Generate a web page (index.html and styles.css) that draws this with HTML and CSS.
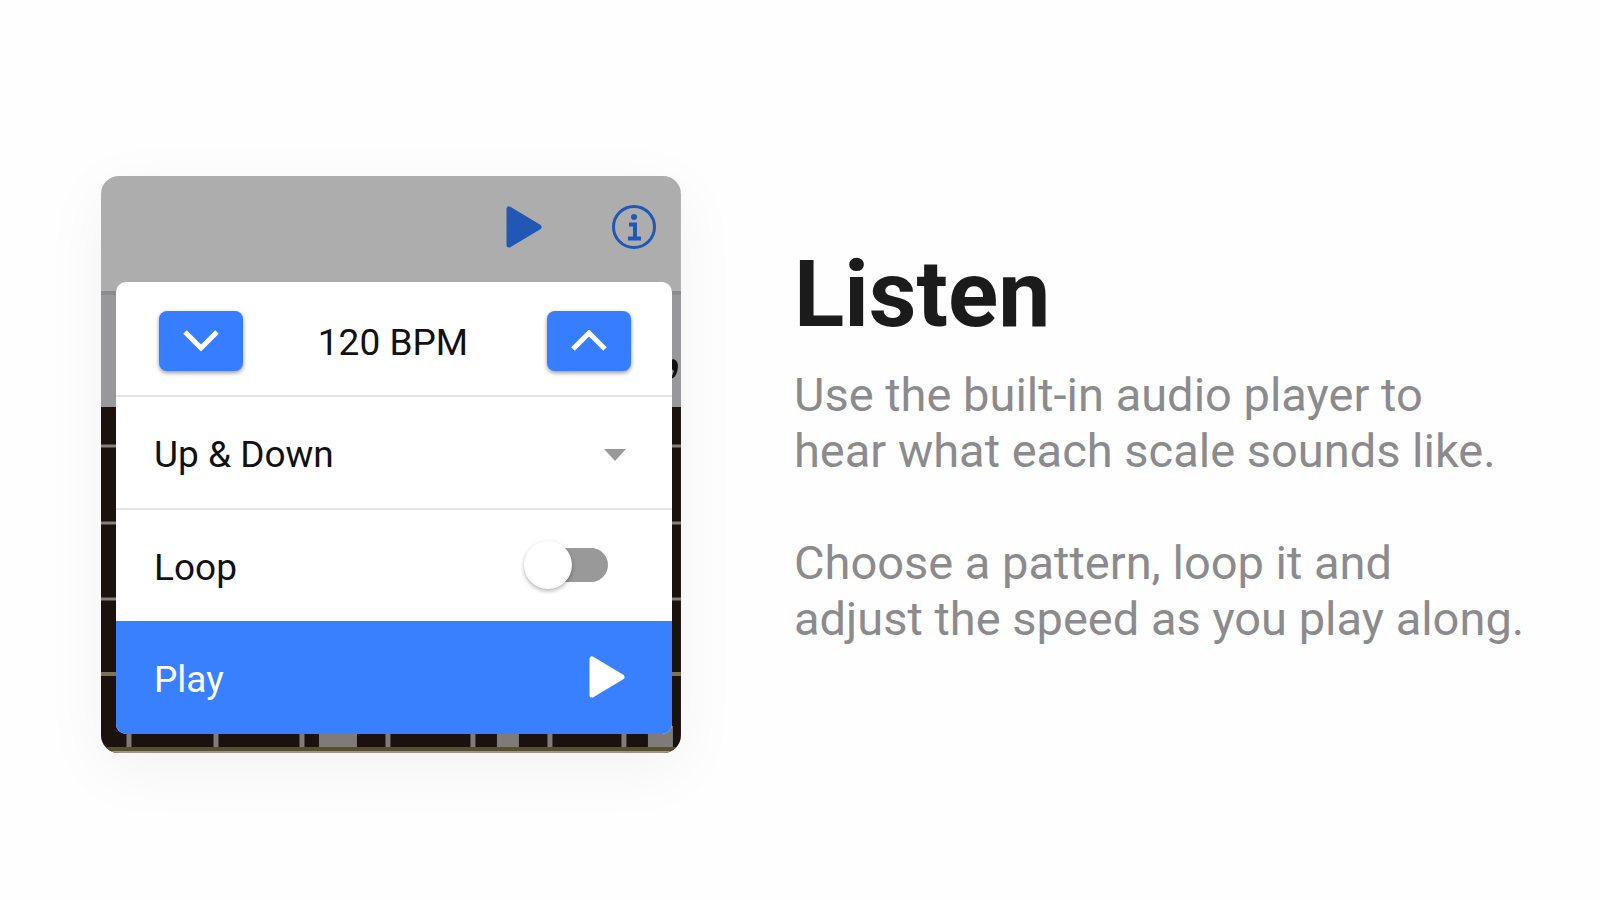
FILE: index.html
```
<!DOCTYPE html>
<html lang="en">
<head>
    <meta charset="UTF-8">
    <meta name="viewport" content="width=device-width, initial-scale=1">
    <title>Listen</title>
    <link rel="stylesheet" href="styles.css">
</head>
<body>
    <main class="feature">
        <section class="phone">
            <!-- fretboard behind the player -->
            <svg class="fretboard" viewBox="0 0 580 577" preserveAspectRatio="none" aria-hidden="true">
                <rect width="580" height="577" fill="#adadad"/>
                <rect y="115" width="580" height="4" fill="#8c8c8c"/>
                <rect y="119" width="580" height="112" fill="#98989a"/>
                <rect y="231" width="580" height="346" fill="#1b1210"/>
                <path d="M0 270h580M0 347h580M0 423h580" stroke="#86807e" stroke-width="3"/>
                <path d="M0 498h580" stroke="#7d7353" stroke-width="4"/>
                <path d="M28 550v21M115 550v21M201 550v21M287 550v21M372 550v21M449 550v21M523 550v21" stroke="#827b79" stroke-width="5"/>
                <path d="M218 550h38v21h-38zM396 550h22v21h-22zM547 550h25v21h-25z" fill="#807a78"/>
                <rect y="571" width="580" height="4" fill="#57502f"/>
                <rect y="575" width="580" height="2" fill="#9c978c"/>
                <path d="M570 184c3-2 7 1 7 6s-2 12-7 13l3-8-3-3z" fill="#111"/>
            </svg>
            <header class="toolbar">
                <button class="icon-btn" type="button" aria-label="Play scale">
                    <svg width="38" height="44" viewBox="0 0 38 44"><path d="M4 4v36L34 22z" fill="#2157b5" stroke="#2157b5" stroke-width="5" stroke-linejoin="round"/></svg>
                </button>
                <button class="icon-btn" type="button" aria-label="Info">
                    <svg width="46" height="46" viewBox="0 0 46 46" fill="none" stroke="#2157b5">
                        <circle cx="23" cy="23" r="20.5" stroke-width="3"/>
                        <circle cx="23" cy="13" r="3" fill="#2157b5" stroke="none"/>
                        <path d="M18 20.500h6V34M17 34.500h13" stroke-width="4"/>
                    </svg>
                </button>
            </header>
            <form class="player">
                <div class="row row-tempo">
                    <button class="step" type="button" aria-label="Slower">
                        <svg width="36" height="22" viewBox="0 0 36 22"><path d="M2 2l16 16L34 2"/></svg>
                    </button>
                    <output class="tempo">120 BPM</output>
                    <button class="step" type="button" aria-label="Faster">
                        <svg width="36" height="22" viewBox="0 0 36 22"><path d="M2 19L18 3l16 16"/></svg>
                    </button>
                </div>
                <div class="row">
                    <select class="pattern" aria-label="Pattern">
                        <option>Up &amp; Down</option>
                        <option>Up</option>
                        <option>Down</option>
                    </select>
                    <svg class="caret" width="22" height="12" viewBox="0 0 22 12" aria-hidden="true"><path d="M0 0h22L11 12z" fill="#999"/></svg>
                </div>
                <div class="row row-loop">
                    <label for="loop">Loop</label>
                    <input class="switch" type="checkbox" id="loop">
                </div>
                <button class="row row-play" type="button">
                    Play
                    <svg width="38" height="44" viewBox="0 0 38 44" aria-hidden="true"><path d="M4 4v36L34 22z" fill="#fff" stroke="#fff" stroke-width="5" stroke-linejoin="round"/></svg>
                </button>
            </form>
        </section>
        <section class="copy">
            <h1>Listen</h1>
            <p>Use the built-in audio player to<br>hear what each scale sounds like.</p>
            <p>Choose a pattern, loop it and<br>adjust the speed as you play along.</p>
        </section>
    </main>
</body>
</html>
```
FILE: styles.css
```
*{
    box-sizing: border-box;
}
body{
    margin: 0;
    font-family: Roboto, "Liberation Sans", sans-serif;
    background: #fefefe;
    color: #1b1b1c;
}
button, select{
    font: inherit;
    color: inherit;
    border: 0;
    padding: 0;
    background: none;
}
svg{
    display: block;
    flex: none;
}
.feature{
    min-height: 100vh;
    display: grid;
    grid-template-columns: 38fr 50fr;
    column-gap: 113px;
    align-items: center;
    padding: 29px 43px 0 101px;
}

/* App card */
.phone{
    position: relative;
    overflow: hidden;
    padding: 0 9px 19px 15px;
    border-radius: 18px;
    font-size: 37px;
    box-shadow: 0 16px 64px rgba(0, 0, 0, 0.05);
}
.fretboard{
    position: absolute;
    inset: 0;
    width: 100%;
    height: 100%;
}
.toolbar{
    position: relative;
    height: 106px;
    display: flex;
    justify-content: flex-end;
    align-items: center;
    gap: 68px;
    padding: 0 15px 5px 0;
}
.player{
    position: relative;
    border-radius: 10px;
    overflow: hidden;
    background: #fff;
    color: #111;
}
.row{
    width: 100%;
    height: 113px;
    display: flex;
    justify-content: space-between;
    align-items: center;
    padding: 4px 46px 0 38px;
    border-top: 2px solid #e4e4e4;
}
.row-tempo{
    padding: 4px 41px 0 43px;
    border-top: 0;
}
.tempo{
    padding: 4px 4px 0 0;
}
.step{
    width: 84px;
    height: 60px;
    display: flex;
    justify-content: center;
    align-items: center;
    border-radius: 8px;
    background: #377dff;
    box-shadow: 0 2px 4px rgba(0, 0, 0, 0.4);
}
.step path{
    fill: none;
    stroke: #fff;
    stroke-width: 5;
}
.pattern{
    flex: 1;
    appearance: none;
}
.row-loop{
    padding-right: 64px;
}
.switch{
    appearance: none;
    width: 76px;
    height: 34px;
    margin: 0;
    display: flex;
    align-items: center;
    border-radius: 17px;
    background: #999;
}
.switch::before{
    content: "";
    width: 48px;
    height: 48px;
    margin-left: -8px;
    border-radius: 50%;
    background: #fff;
    box-shadow: 0 2px 4px rgba(0, 0, 0, 0.3);
}
.switch:checked{
    justify-content: flex-end;
    background: #377dff;
}
.row-play{
    border-top: 0;
    background: #3880ff;
    color: #fff;
}
.switch, .row-play svg{
    margin-bottom: 6px;
}

/* Text */
.copy{
    padding-bottom: 36px;
}
h1{
    margin: 0 0 24px;
    font-size: 93px;
    line-height: 96px;
    font-weight: 700;
}
p{
    margin: 0 0 56px;
    font-size: 47px;
    line-height: 56px;
    color: #8b8b8d;
}
p:last-child{
    margin-bottom: 0;
}
```
